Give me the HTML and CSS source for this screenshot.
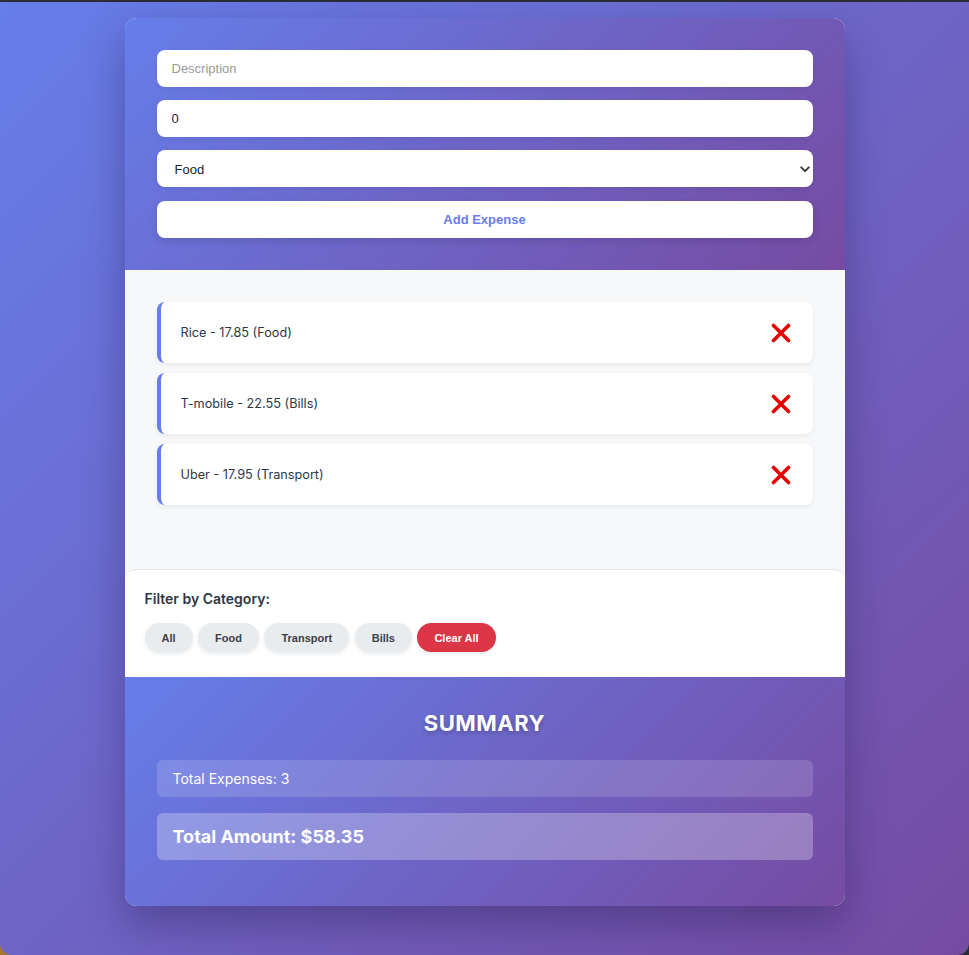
FILE: index.html
```html
<!DOCTYPE html>
<html>
<head>
<meta charset="utf-8">
<link rel="stylesheet" href="styles.css">
</head>
<body>
<div class="window">
  <div class="app">
    <section class="form">
      <input class="field" type="text" placeholder="Description">
      <input class="field" type="text" value="0">
      <div class="select-wrap">
        <select class="field select"><option>Food</option></select>
        <svg class="chev" width="10" height="7" viewBox="0 0 10 7"><path d="M1.2 1.3 L5 5.2 L8.8 1.3" fill="none" stroke="#333" stroke-width="1.8" stroke-linecap="round" stroke-linejoin="round"/></svg>
      </div>
      <button class="add">Add Expense</button>
    </section>
    <section class="list">
      <div class="item"><span>Rice - 17.85 (Food)</span><svg class="x" width="20" height="20" viewBox="0 0 20 20"><path d="M2.5 2.5 L17.5 17.5 M17.5 2.5 L2.5 17.5" stroke="#e60000" stroke-width="3.6" stroke-linecap="round"/></svg></div>
      <div class="item"><span>T-mobile - 22.55 (Bills)</span><svg class="x" width="20" height="20" viewBox="0 0 20 20"><path d="M2.5 2.5 L17.5 17.5 M17.5 2.5 L2.5 17.5" stroke="#e60000" stroke-width="3.6" stroke-linecap="round"/></svg></div>
      <div class="item"><span>Uber - 17.95 (Transport)</span><svg class="x" width="20" height="20" viewBox="0 0 20 20"><path d="M2.5 2.5 L17.5 17.5 M17.5 2.5 L2.5 17.5" stroke="#e60000" stroke-width="3.6" stroke-linecap="round"/></svg></div>
    </section>
    <section class="filter">
      <div class="filter-label">Filter by Category:</div>
      <div class="chips">
        <button class="chip">All</button>
        <button class="chip">Food</button>
        <button class="chip">Transport</button>
        <button class="chip">Bills</button>
        <button class="chip danger">Clear All</button>
      </div>
    </section>
    <section class="summary">
      <h2 class="sum-title">SUMMARY</h2>
      <div class="sum-row">Total Expenses: 3</div>
      <div class="sum-row total">Total Amount: $58.35</div>
    </section>
  </div>
</div>
</body>
</html>
```
FILE: styles.css
```css
* { box-sizing: border-box; }
html, body { margin: 0; padding: 0; }
body {
  background: radial-gradient(circle at 0 100%, #a8752e 0, #a8752e 14px, rgba(42,45,51,0) 40px), #2a2d33;
  height: 955px;
  overflow: hidden;
  font-family: Inter, "Liberation Sans", sans-serif;
}
.window {
  margin-top: 2px;
  height: 953px;
  background: linear-gradient(135deg, #667eea 0%, #764ba2 100%);
  border-radius: 0 0 12px 12px;
  padding-top: 16px;
}
.app {
  width: 720px;
  margin: 0 auto;
  border-radius: 12px;
  overflow: hidden;
  box-shadow: 0 18px 40px rgba(30, 20, 70, 0.35);
  background: #f7f8fa;
}
.form {
  background: linear-gradient(135deg, #667eea 0%, #764ba2 100%);
  padding: 32px 32px 32px;
  display: flex;
  flex-direction: column;
  gap: 13px;
}
.field {
  display: block;
  width: 100%;
  height: 37px;
  border: none;
  border-radius: 8px;
  background: #fff;
  padding: 0 15px;
  font-family: "Liberation Sans", Arial, sans-serif;
  font-size: 13px;
  color: #222;
  box-shadow: 0 2px 6px rgba(0,0,0,0.06);
  outline: none;
}
.field::placeholder { color: #9a9a9a; }
.select-wrap { position: relative; }
.select {
  appearance: none;
  -webkit-appearance: none;
  padding-left: 18px;
  padding-top: 1px;
}
.chev { position: absolute; right: 3px; top: 16px; }
.add {
  height: 37px;
  border: none;
  border-radius: 8px;
  background: #fff;
  color: #667eea;
  font-family: "Liberation Sans", Arial, sans-serif;
  font-weight: bold;
  font-size: 13px;
  box-shadow: 0 3px 8px rgba(0,0,0,0.12);
  margin-top: 1px;
}
.list {
  background: #f7f8fa;
  padding: 32px 32px 64px;
  display: flex;
  flex-direction: column;
  gap: 10px;
}
.item {
  height: 61px;
  background: #fff;
  border-left: 4px solid #667eea;
  border-radius: 8px;
  box-shadow: 0 2px 5px rgba(0,0,0,0.06);
  display: flex;
  align-items: center;
  justify-content: space-between;
  padding: 0 22px 0 20px;
  font-size: 12.7px;
  color: #2d3748;
}
.filter {
  background: #fff;
  border-top: 1px solid #e2e6ea;
  border-radius: 10px 10px 0 0;
  padding: 20px 20px 25px;
}
.filter-label {
  font-size: 14px;
  font-weight: 600;
  color: #2d3748;
  margin-bottom: 16px;
  line-height: 17px;
}
.chips { display: flex; gap: 5.5px; }
.chip {
  height: 29px;
  border: none;
  border-radius: 15px;
  background: #e9ecef;
  color: #3d4148;
  font-family: "Liberation Sans", Arial, sans-serif;
  font-weight: bold;
  font-size: 11px;
  padding: 0 17px;
  box-shadow: 0 2px 4px rgba(0,0,0,0.08);
}
.chip.danger { background: #dc3545; color: #fff; }
.summary {
  background: linear-gradient(135deg, #667eea 0%, #764ba2 100%);
  padding: 32px 32px 46px;
  color: #fff;
}
.sum-title {
  margin: 0 0 23px;
  text-align: center;
  font-size: 22px;
  font-weight: 700;
  letter-spacing: 0.5px;
  line-height: 28px;
  text-shadow: 0 2px 4px rgba(0,0,0,0.25);
}
.sum-row {
  height: 37px;
  border-radius: 6px;
  background: rgba(255,255,255,0.15);
  display: flex;
  align-items: center;
  padding: 0 16px;
  font-size: 14px;
  margin-bottom: 16px;
}
.sum-row.total {
  height: 47px;
  background: rgba(255,255,255,0.27);
  font-size: 18px;
  font-weight: 700;
  margin-bottom: 0;
}
```
